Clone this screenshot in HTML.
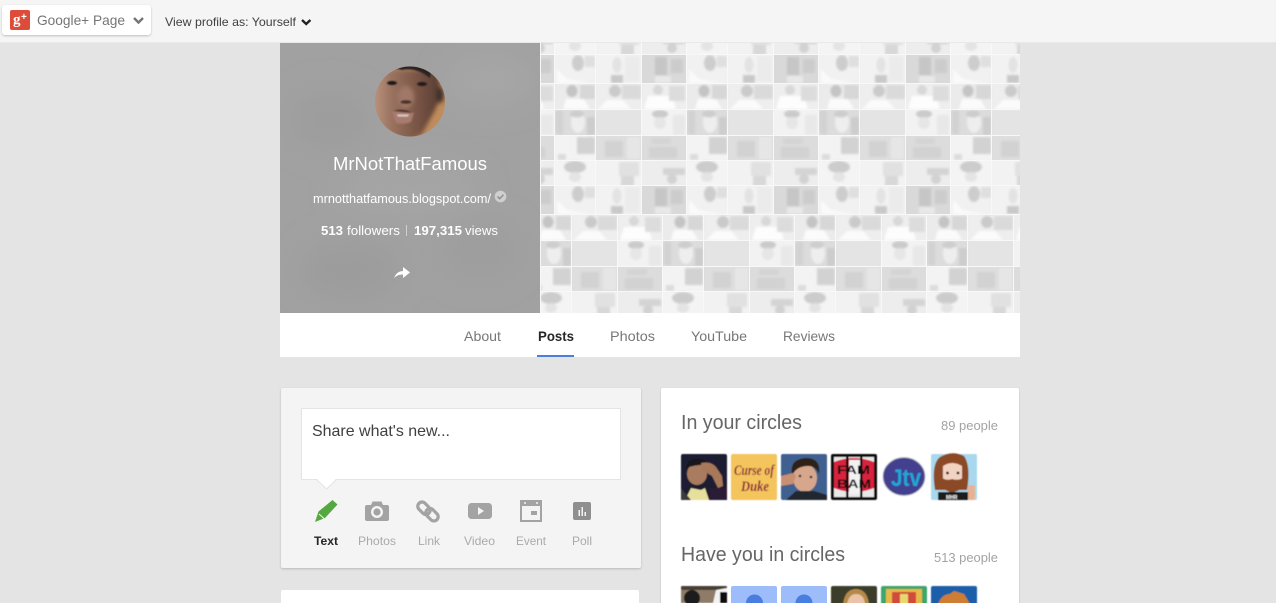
<!DOCTYPE html>
<html><head><meta charset="utf-8"><title>MrNotThatFamous</title>
<style>
html,body{margin:0;padding:0;width:1276px;height:603px;overflow:hidden;background:#e4e4e4}
#w{position:relative;width:1276px;height:603px;overflow:hidden;background:#e4e4e4}
.b{position:absolute;box-sizing:border-box}
svg{position:absolute;left:0;top:0;display:block}
text{font-family:"Liberation Sans",sans-serif}
</style></head><body><div id="w">
<div class="b" style="left:0;top:0;width:1276px;height:43px;background:#f5f5f5;border-bottom:1px solid #e9e9e9"></div>
<div class="b" style="left:2px;top:5px;width:149px;height:30px;background:#fff;border-radius:3px;box-shadow:0 1px 2px rgba(0,0,0,.22)"></div>
<div class="b" style="left:280px;top:313px;width:740px;height:44px;background:#fff"></div>
<div class="b" style="left:537px;top:355px;width:37px;height:2px;background:#4a7fe0"></div>
<div class="b" style="left:281px;top:388px;width:360px;height:180px;background:#f4f4f4;border-radius:2px;box-shadow:0 1px 2px rgba(0,0,0,.2)"></div>
<div class="b" style="left:281px;top:590px;width:358px;height:13px;background:#fff;border-radius:2px 2px 0 0"></div>
<div class="b" style="left:661px;top:388px;width:358px;height:215px;background:#fff;border-radius:2px 2px 0 0;box-shadow:0 1px 2px rgba(0,0,0,.15)"></div>
<div class="b" style="left:301px;top:408px;width:320px;height:72px;background:#fff;border:1px solid #e4e4e4"></div>

<svg width="1276" height="603" viewBox="0 0 1276 603" xmlns="http://www.w3.org/2000/svg">
<defs>
<filter id="bl" x="-20%" y="-20%" width="140%" height="140%"><feGaussianBlur stdDeviation="2"/></filter>
<filter id="bl1" x="-20%" y="-20%" width="140%" height="140%"><feGaussianBlur stdDeviation="0.8"/></filter>
<filter id="bl2" x="-20%" y="-20%" width="140%" height="140%"><feGaussianBlur stdDeviation="0.5"/></filter>
<filter id="bl3" x="-20%" y="-20%" width="140%" height="140%"><feGaussianBlur stdDeviation="14"/></filter>
<filter id="blt" x="-5%" y="-5%" width="110%" height="110%"><feGaussianBlur stdDeviation="1.1"/></filter>
<clipPath id="ph"><circle cx="410" cy="101.5" r="35"/></clipPath>
<clipPath id="panel"><rect x="280" y="43" width="260" height="270"/></clipPath>
<g id="tiles">
  <rect width="132" height="131" fill="#eeeeee"/>
  <rect x="0" y="0" width="40" height="28" fill="#f1f1f1"/>
  <rect x="41" y="0" width="45" height="28" fill="#f2f2f2"/>
  <rect x="87" y="0" width="44" height="28" fill="#d9d9d9"/>
  <rect x="0" y="29" width="40" height="25" fill="#ebebeb"/>
  <rect x="41" y="29" width="45" height="25" fill="#eeeeee"/>
  <rect x="87" y="29" width="44" height="25" fill="#eeeeee"/>
  <rect x="0" y="55" width="40" height="25" fill="#dcdcdc"/>
  <rect x="41" y="55" width="45" height="25" fill="#e4e4e4"/>
  <rect x="87" y="55" width="44" height="25" fill="#f2f2f2"/>
  <rect x="0" y="81" width="40" height="24" fill="#f3f3f3"/>
  <rect x="41" y="81" width="45" height="24" fill="#dedede"/>
  <rect x="87" y="81" width="44" height="24" fill="#dcdcdc"/>
  <rect x="0" y="106" width="40" height="25" fill="#f4f4f4"/>
  <rect x="41" y="106" width="45" height="25" fill="#f2f2f2"/>
  <rect x="87" y="106" width="44" height="25" fill="#ededed"/>
  <g filter="url(#blt)">
    <ellipse cx="23" cy="8" rx="6" ry="8" fill="#cdcdcd"/><rect x="30" y="1" width="10" height="11" fill="#dfdfdf"/>
    <path d="M2 14l10 10 24 4H2z" fill="#fafafa"/>
    <ellipse cx="62" cy="10" rx="4.500" ry="8" fill="#e3e3e3"/><rect x="56" y="20" width="12" height="8" fill="#c9c9c9"/><rect x="70" y="1" width="15" height="26" fill="#ebebeb"/>
    <rect x="100" y="2" width="12" height="18" fill="#c6c6c6"/><rect x="116" y="4" width="12" height="14" fill="#cccccc"/><rect x="100" y="21" width="16" height="7" fill="#e8e8e8"/>
    <rect x="25" y="30" width="15" height="14" fill="#d7d7d7"/><ellipse cx="17" cy="36" rx="5.500" ry="6" fill="#c4c4c4"/>
    <path d="M8 54l3-10 18 0 6 10z" fill="#fbfbfb"/>
    <ellipse cx="60" cy="36" rx="6" ry="6" fill="#cacaca"/><rect x="67" y="30" width="19" height="14" fill="#dadada"/>
    <path d="M43 54l9-9 16 0 8 9z" fill="#fbfbfb"/>
    <ellipse cx="103" cy="35" rx="5" ry="5" fill="#d8d8d8"/><path d="M89 54l4-13 24 0 4 13z" fill="#fdfdfd"/><rect x="114" y="31" width="16" height="15" fill="#dcdcdc"/>
    <ellipse cx="23" cy="67" rx="7" ry="11" fill="#eeeeee"/><ellipse cx="22" cy="59" rx="7" ry="3.500" fill="#cdcdcd"/><rect x="32" y="62" width="8" height="18" fill="#cdcdcd"/><rect x="1" y="56" width="7" height="23" fill="#d2d2d2"/>
    <ellipse cx="105" cy="59" rx="8" ry="4" fill="#cacaca"/><ellipse cx="105" cy="68" rx="6" ry="6" fill="#e6e6e6"/><rect x="118" y="60" width="12" height="20" fill="#e8e8e8"/>
    <rect x="22" y="82" width="18" height="17" fill="#d2d2d2"/><rect x="3" y="99" width="8" height="6" fill="#dcdcdc"/>
    <rect x="50" y="86" width="18" height="16" fill="#d2d2d2"/><rect x="72" y="82" width="13" height="22" fill="#e6e6e6"/>
    <rect x="94" y="92" width="28" height="11" fill="#d2d2d2"/><rect x="96" y="83" width="20" height="6" fill="#d4d4d4"/>
    <ellipse cx="20" cy="112" rx="11" ry="6" fill="#cccccc"/><ellipse cx="20" cy="122" rx="6" ry="5" fill="#e4e4e4"/>
    <rect x="64" y="107" width="20" height="14" fill="#e1e1e1"/><rect x="66" y="121" width="13" height="10" fill="#d8d8d8"/>
    <rect x="108" y="113" width="22" height="7" fill="#d4d4d4"/><ellipse cx="117" cy="124" rx="5" ry="5" fill="#d2d2d2"/>
  </g>
  <g fill="#f8f8f8">
    <rect x="40" y="0" width="1" height="131"/><rect x="86" y="0" width="1" height="131"/><rect x="131" y="0" width="1" height="131"/>
    <rect x="0" y="28" width="132" height="1"/><rect x="0" y="54" width="132" height="1"/><rect x="0" y="80" width="132" height="1"/><rect x="0" y="105" width="132" height="1"/><rect x="0" y="130" width="132" height="1"/>
  </g>
</g>
<pattern id="mA" patternUnits="userSpaceOnUse" x="555" y="55" width="132" height="131"><use href="#tiles"/></pattern>
<pattern id="mB" patternUnits="userSpaceOnUse" x="531" y="55" width="132" height="131"><use href="#tiles"/></pattern>
<linearGradient id="fg" x1="0" x2="1" y1="0" y2="0"><stop offset="0" stop-color="#c19a85"/><stop offset=".3" stop-color="#9a7360"/><stop offset=".65" stop-color="#7a5646"/><stop offset="1" stop-color="#573c32"/></linearGradient>
</defs>

<!-- cover -->
<rect x="540" y="43" width="480" height="171" fill="url(#mA)"/>
<rect x="540" y="214" width="480" height="99" fill="url(#mB)"/>
<rect x="540" y="43" width="1" height="270" fill="#f7f7f7"/>

<!-- side panel -->
<rect x="280" y="43" width="260" height="270" fill="#a1a1a1"/>
<g clip-path="url(#panel)" filter="url(#bl3)">
  <ellipse cx="330" cy="120" rx="40" ry="30" fill="#9d9d9d"/>
  <ellipse cx="490" cy="80" rx="45" ry="25" fill="#a6a6a6"/>
  <ellipse cx="350" cy="270" rx="50" ry="30" fill="#9c9c9c"/>
  <ellipse cx="480" cy="250" rx="40" ry="30" fill="#9e9e9e"/>
  <ellipse cx="410" cy="190" rx="70" ry="25" fill="#a5a5a5"/>
</g>

<!-- profile photo -->
<g clip-path="url(#ph)">
  <rect x="374" y="66" width="72" height="72" fill="#c08c5c"/>
  <g filter="url(#bl)">
    <path d="M370 70h68l3 26-7 16-12 22-10 6h-16l-14-10-12-20z" fill="url(#fg)"/>
    <ellipse cx="440" cy="95" rx="4" ry="8" fill="#40302a"/>
    <ellipse cx="406" cy="97" rx="8" ry="11" fill="#a07868"/>
  </g>
  <g filter="url(#bl1)">
    <path d="M384 72q8-5 18-2 14-3 28 8l2-14h-50z" fill="#2c2320"/>
    <ellipse cx="392" cy="83" rx="5" ry="2" fill="#1d1716"/>
    <ellipse cx="422" cy="84" rx="5" ry="2" fill="#231b19"/>
    <ellipse cx="406" cy="102" rx="5.500" ry="1.800" fill="#4a322c"/>
    <path d="M392 112q12-4 22 1l-3 9q-8 3-15 1z" fill="#a87a70"/>
    <path d="M393 111q10-3 20 2-10-1-20-2z" fill="#3a2723"/>
    <path d="M397 114.500h12l-1 2h-10z" fill="#d8ccc4"/>
  </g>
</g>

<!-- name etc -->
<text x="333" y="170" font-size="18" fill="#fff" textLength="154" lengthAdjust="spacingAndGlyphs">MrNotThatFamous</text>
<text x="313" y="203" font-size="12.5" fill="#fff" textLength="178" lengthAdjust="spacingAndGlyphs">mrnotthatfamous.blogspot.com/</text>
<circle cx="500.5" cy="196.5" r="5.8" fill="#cfcfcf"/>
<path d="M497.5 196.5l2.2 2.2 3.8-4" fill="none" stroke="#8c8c8c" stroke-width="1.4"/>
<text x="321" y="235" font-size="13" font-weight="bold" fill="#fff" textLength="22" lengthAdjust="spacingAndGlyphs">513</text>
<text x="347" y="235" font-size="13" fill="#fff" textLength="53" lengthAdjust="spacingAndGlyphs">followers</text>
<rect x="406" y="225" width="1" height="11" fill="#cfcfcf"/>
<text x="414" y="235" font-size="13" font-weight="bold" fill="#fff" textLength="48" lengthAdjust="spacingAndGlyphs">197,315</text>
<text x="465" y="235" font-size="13" fill="#fff" textLength="33" lengthAdjust="spacingAndGlyphs">views</text>
<path d="M394 278.500q2-7 9-7.500V267l7 5.500-7 5.500v-3.500q-5-.5-9 3.500z" fill="#fff"/>

<!-- top bar -->
<rect x="10" y="10" width="20" height="20" rx="2" fill="#dd4b39"/>
<text x="13" y="24" font-size="15" font-weight="bold" fill="#fff" style="font-family:'Liberation Serif',serif">g</text>
<text x="21" y="20" font-size="10" font-weight="bold" fill="#fff">+</text>
<text x="37" y="25" font-size="14" fill="#757575" textLength="88" lengthAdjust="spacingAndGlyphs">Google+ Page</text>
<path d="M134 18l4.500 4.500 4.500-4.500" fill="none" stroke="#757575" stroke-width="2.400"/>
<text x="165" y="26" font-size="12" fill="#404040" textLength="131" lengthAdjust="spacingAndGlyphs">View profile as: Yourself</text>
<path d="M302 20l4.200 4 4.200-4" fill="none" stroke="#222" stroke-width="2.400"/>

<!-- tabs -->
<text x="464" y="341" font-size="14" fill="#777" textLength="37" lengthAdjust="spacingAndGlyphs">About</text>
<text x="538" y="341" font-size="14" font-weight="bold" fill="#262626" textLength="36" lengthAdjust="spacingAndGlyphs">Posts</text>
<text x="610" y="341" font-size="14" fill="#777" textLength="45" lengthAdjust="spacingAndGlyphs">Photos</text>
<text x="691" y="341" font-size="14" fill="#777" textLength="56" lengthAdjust="spacingAndGlyphs">YouTube</text>
<text x="783" y="341" font-size="14" fill="#777" textLength="52" lengthAdjust="spacingAndGlyphs">Reviews</text>

<!-- share box -->
<path d="M316.500 479.500l10 9.500 10-9.500" fill="#fff" stroke="#e4e4e4"/>
<rect x="318" y="478" width="17" height="2" fill="#fff"/>
<text x="312" y="436" font-size="16" fill="#404040" textLength="138" lengthAdjust="spacingAndGlyphs">Share what's new...</text>

<!-- pencil -->
<path d="M315 522l3.500-10.500L332.500 500l5 4.500-12.500 13.500z" fill="#53a93f"/>
<path d="M319 514l5 4.500" stroke="#f4f4f4" stroke-width="1" fill="none"/>
<!-- camera -->
<path d="M365 507q0-2 2-2h4l1.500-3.500h9L383 505h4q2 0 2 2v12q0 2-2 2h-20q-2 0-2-2z" fill="#a3a3a3"/>
<circle cx="377" cy="512" r="6" fill="#f4f4f4"/><circle cx="377" cy="512" r="3.600" fill="#a3a3a3"/>
<!-- link -->
<g fill="none" stroke="#a3a3a3" stroke-width="3.200">
  <rect x="417" y="504" width="14" height="8.500" rx="4.200" transform="rotate(45 424 508.200)"/>
  <rect x="425" y="510.500" width="14" height="8.500" rx="4.200" transform="rotate(45 432 514.700)"/>
</g>
<!-- video -->
<rect x="468" y="503" width="24" height="16" rx="3.500" fill="#a3a3a3"/>
<path d="M478 507v8l6-4z" fill="#f4f4f4"/>
<!-- event -->
<rect x="520" y="500" width="22" height="22" fill="#a3a3a3"/>
<rect x="522" y="506" width="18" height="14" fill="#f4f4f4"/>
<rect x="531" y="511" width="6" height="4" fill="#a3a3a3"/>
<circle cx="525" cy="503" r="1" fill="#f4f4f4"/><circle cx="537" cy="503" r="1" fill="#f4f4f4"/>
<!-- poll -->
<rect x="573" y="502" width="18" height="18" rx="2" fill="#8f8f8f"/>
<rect x="578.500" y="510" width="1.500" height="6" fill="#f4f4f4"/><rect x="581.500" y="507" width="1.500" height="9" fill="#f4f4f4"/><rect x="584.500" y="512" width="1.500" height="4" fill="#f4f4f4"/>

<text x="314" y="545" font-size="12" font-weight="bold" fill="#262626" textLength="24" lengthAdjust="spacingAndGlyphs">Text</text>
<text x="358" y="545" font-size="12" fill="#aaa" textLength="38" lengthAdjust="spacingAndGlyphs">Photos</text>
<text x="418" y="545" font-size="12" fill="#aaa" textLength="22" lengthAdjust="spacingAndGlyphs">Link</text>
<text x="464" y="545" font-size="12" fill="#aaa" textLength="31" lengthAdjust="spacingAndGlyphs">Video</text>
<text x="516" y="545" font-size="12" fill="#aaa" textLength="30" lengthAdjust="spacingAndGlyphs">Event</text>
<text x="572" y="545" font-size="12" fill="#aaa" textLength="20" lengthAdjust="spacingAndGlyphs">Poll</text>

<!-- right card headings -->
<text x="681" y="429" font-size="20" fill="#666" textLength="121" lengthAdjust="spacingAndGlyphs">In your circles</text>
<text x="941" y="430" font-size="13" fill="#a3a3a3" textLength="57" lengthAdjust="spacingAndGlyphs">89 people</text>
<text x="681" y="561" font-size="20" fill="#666" textLength="164" lengthAdjust="spacingAndGlyphs">Have you in circles</text>
<text x="934" y="562" font-size="13" fill="#a3a3a3" textLength="64" lengthAdjust="spacingAndGlyphs">513 people</text>

<!-- avatars row 1 -->
<g filter="url(#bl2)">
  <rect x="681" y="454" width="46" height="46" rx="2" fill="#1c1a33"/>
  <ellipse cx="697" cy="474" rx="10" ry="11" fill="#a97c60"/>
  <path d="M686 468q2-10 13-9 8 1 9 6-10-1-22 3z" fill="#15121b"/>
  <path d="M701 463q10-2 15 4l6 9 1 10-5 2-6-12-10-6z" fill="#a8785a"/>
  <path d="M685 500l6-12 10 2 4-2 4 12z" fill="#e6e09c"/>
  <path d="M681 488l10 12h-10z" fill="#3a3a3a"/>
  <rect x="710" y="488" width="17" height="12" fill="#2a1c34"/>

  <rect x="731" y="454" width="46" height="46" rx="2" fill="#f4c55c"/>
  <text x="734" y="475" font-size="15" font-weight="bold" font-style="italic" fill="#8e2a3c" textLength="40" lengthAdjust="spacingAndGlyphs" style="font-family:'Liberation Serif',serif">Curse of</text>
  <text x="741" y="491" font-size="15" font-weight="bold" font-style="italic" fill="#8e2a3c" textLength="28" lengthAdjust="spacingAndGlyphs" style="font-family:'Liberation Serif',serif">Duke</text>

  <rect x="781" y="454" width="46" height="46" rx="2" fill="#40608f"/>
  <ellipse cx="805" cy="478" rx="12" ry="14" fill="#d6a78c"/>
  <path d="M792 475q-3-16 14-17 15 0 13 16-3-8-11-8-11 0-16 9z" fill="#2e2419"/>
  <path d="M781 476l12-3 3 3-3 8-12 2z" fill="#c98f72"/>
  <circle cx="800" cy="476" r="1.300" fill="#333"/><circle cx="811" cy="477" r="1.300" fill="#333"/>
  <path d="M786 500l10-9 18 0 13 4v5z" fill="#22282f"/>

  <rect x="831" y="454" width="46" height="46" rx="2" fill="#0d0d0d"/>
  <rect x="834" y="457" width="40" height="40" fill="#e8e8e8"/>
  <path d="M834 462q20-8 40 0v26q-20 8-40 0z" fill="#d9203c"/>
  <rect x="846" y="457" width="2.500" height="40" fill="#111"/><rect x="860" y="457" width="2.500" height="40" fill="#111"/>
  <rect x="849" y="460" width="11" height="34" fill="#f2f2f2"/>
  <text x="837" y="474" font-size="12" font-weight="bold" fill="#111" textLength="33" lengthAdjust="spacingAndGlyphs">FAM</text>
  <text x="837" y="488" font-size="12" font-weight="bold" fill="#111" textLength="34" lengthAdjust="spacingAndGlyphs">BAM</text>

  <rect x="881" y="454" width="46" height="46" fill="#fff"/>
  <ellipse cx="904" cy="476.500" rx="21" ry="19" fill="#43418f" stroke="#b0b0c0" stroke-width="1"/>
  <text x="891" y="486" font-size="24" font-weight="bold" fill="#1fa8d8" textLength="30" lengthAdjust="spacingAndGlyphs">Jtv</text>

  <rect x="931" y="454" width="46" height="46" rx="2" fill="#a9d8ee"/>
  <path d="M935 490q-4-26 5-33 12-7 24-1 7 10 3 34z" fill="#8c4a25"/>
  <path d="M943 466q9-6 19 0v16h-19z" fill="#f2d3c2"/>
  <path d="M942 478q5 3 10 1 6 2 11-1l-1 11-10 4-9-4z" fill="#8c4a25"/>
  <circle cx="947.500" cy="473" r="1.400" fill="#222"/><circle cx="958" cy="473" r="1.400" fill="#222"/>
  <rect x="938" y="492" width="30" height="8" fill="#1b1b1b"/>
  <text x="946" y="499" font-size="5" font-weight="bold" fill="#fff">MHR</text>
  <rect x="968" y="485" width="7" height="15" rx="2" fill="#e8b290"/>
</g>

<!-- avatars row 2 -->
<g filter="url(#bl2)">
  <rect x="681" y="586" width="46" height="17" fill="#8f7c68"/>
  <rect x="681" y="586" width="46" height="4" rx="2" fill="#4a3f35"/>
  <circle cx="692" cy="598" r="8" fill="#1a1a1a"/><path d="M716 590l11-2v15h-14z" fill="#f2f2f2"/><rect x="720" y="592" width="7" height="11" fill="#111"/>
</g>
<rect x="731" y="586" width="46" height="20" rx="2" fill="#9cbdf9"/>
<circle cx="754.500" cy="603" r="8.500" fill="#4a7de0"/>
<rect x="781" y="586" width="46" height="20" rx="2" fill="#9cbdf9"/>
<circle cx="804" cy="603" r="8.500" fill="#4a7de0"/>
<g filter="url(#bl2)">
  <rect x="831" y="586" width="46" height="20" rx="2" fill="#3a3c2c"/>
  <path d="M843 604q2-15 13-15 11 0 13 15z" fill="#b58a4a"/>
  <path d="M847 604q2-10 9-10 8 0 9 10z" fill="#eac3a8"/>
  <rect x="881" y="586" width="46" height="20" rx="2" fill="#3ea66a"/>
  <rect x="886" y="589" width="36" height="16" fill="#e8b84a"/>
  <rect x="892" y="592" width="24" height="12" fill="#d24a3c"/>
  <rect x="900" y="594" width="8" height="10" fill="#e8d870"/>
  <rect x="931" y="586" width="46" height="20" rx="2" fill="#1a5fa8"/>
  <path d="M938 604q4-10 12-10l4-3 10 3 6 10z" fill="#cf7d33"/>
</g>
</svg>
</div></body></html>
